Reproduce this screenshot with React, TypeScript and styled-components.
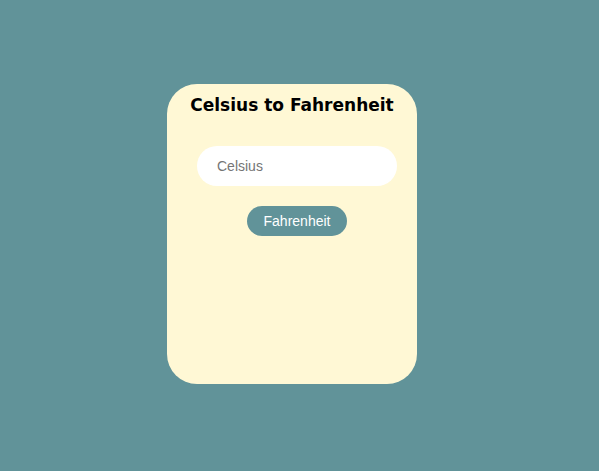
import React from "react";
import styled, { createGlobalStyle } from "styled-components";

const Global = createGlobalStyle`
  html, body { margin: 0; padding: 0; background: #619399; }
  body { font-family: "Liberation Sans", Arial, sans-serif; }
`;

const Page = styled.div`
  min-height: 100vh;
  box-sizing: border-box;
  padding: 84px 0 0 167px;
`;

const Card = styled.div`
  width: 250px;
  height: 300px;
  box-sizing: border-box;
  background: #fff8d5;
  border-radius: 30px;
  display: flex;
  flex-direction: column;
  align-items: center;
  padding: 9px 0 0 10px;
`;

const Title = styled.h1`
  margin: 0 0 0 -10px;
  font-family: "DejaVu Sans", Verdana, sans-serif;
  font-weight: bold;
  font-size: 17px;
  line-height: 24px;
  color: #000;
`;

const Input = styled.input`
  margin-top: 29px;
  width: 200px;
  height: 40px;
  box-sizing: border-box;
  border: none;
  outline: none;
  border-radius: 20px;
  background: #fff;
  padding: 0 20px;
  font-family: "Liberation Sans", Arial, sans-serif;
  font-size: 14px;
  color: #333;
  &::placeholder { color: #757575; }
`;

const Button = styled.button`
  margin-top: 20px;
  width: 100px;
  height: 30px;
  border: none;
  border-radius: 15px;
  background: #619399;
  color: #fff;
  font-family: "Liberation Sans", Arial, sans-serif;
  font-size: 14px;
  cursor: pointer;
`;

export default function App() {
  return (
    <>
      <Global />
      <Page>
        <Card>
          <Title>Celsius to Fahrenheit</Title>
          <Input placeholder="Celsius" />
          <Button>Fahrenheit</Button>
        </Card>
      </Page>
    </>
  );
}
